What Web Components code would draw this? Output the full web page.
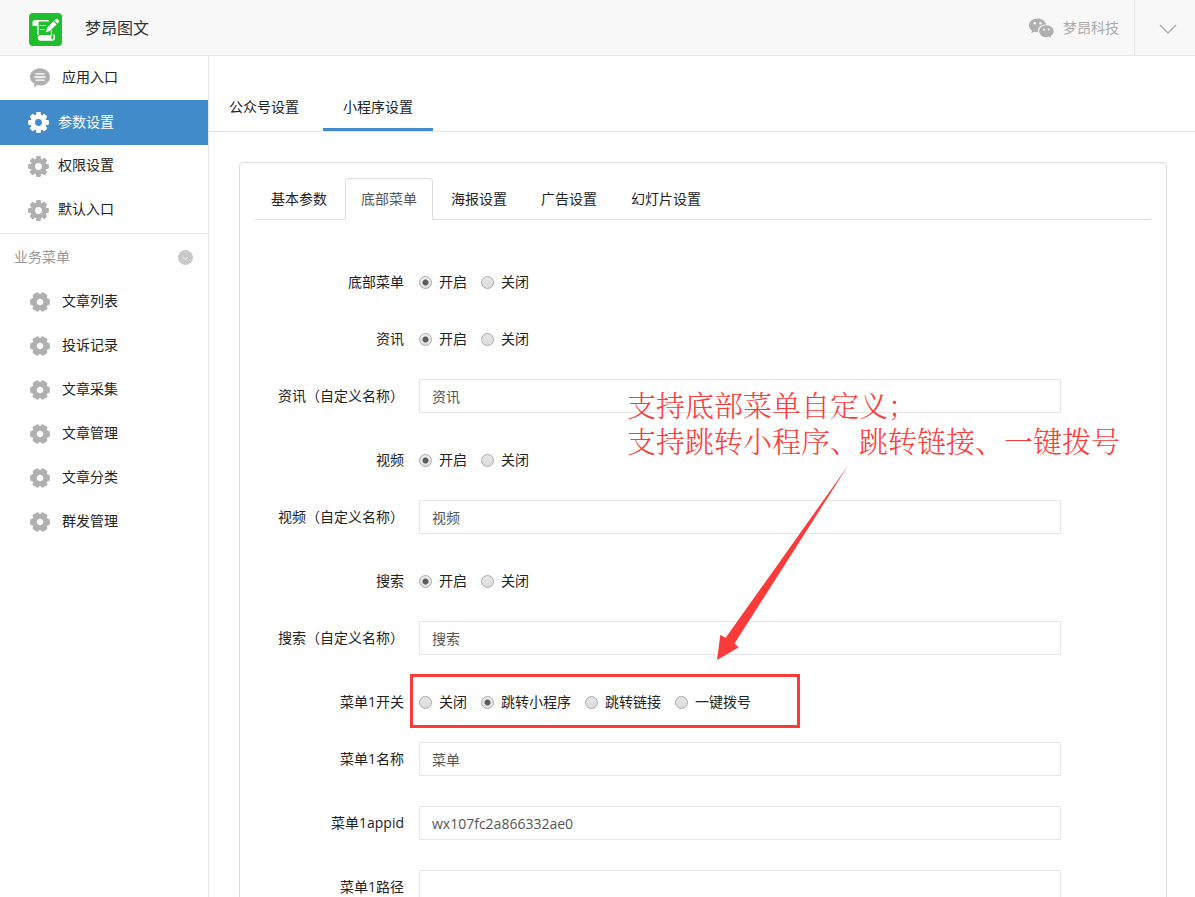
<!DOCTYPE html>
<html lang="zh-CN">
<head>
<meta charset="utf-8">
<meta name="viewport" content="width=device-width, initial-scale=1">
<title>梦昂图文</title>
<style>
  html, body { margin: 0; height: 100%; }
  body {
    font: 14px/20px "Open Sans", "Noto Sans CJK SC", sans-serif;
    color: #222;
    background: #fff;
    --line: #e5e5e8;
    --blue: #428bca;
    --red: #fd3a3a;
  }
</style>
</head>
<body>
<admin-shell>
  <app-header slot="header" app="梦昂图文" account="梦昂科技"></app-header>
  <side-nav slot="nav">
    <side-item icon="bubble">应用入口</side-item>
    <side-item icon="gear" active>参数设置</side-item>
    <side-item icon="gear">权限设置</side-item>
    <side-item icon="gear">默认入口</side-item>
    <side-heading>业务菜单</side-heading>
    <side-item icon="cog">文章列表</side-item>
    <side-item icon="cog">投诉记录</side-item>
    <side-item icon="cog">文章采集</side-item>
    <side-item icon="cog">文章管理</side-item>
    <side-item icon="cog">文章分类</side-item>
    <side-item icon="cog">群发管理</side-item>
  </side-nav>
  <page-tabs items="公众号设置,小程序设置" current="1"></page-tabs>
  <settings-card>
    <folder-tabs slot="tabs" items="基本参数,底部菜单,海报设置,广告设置,幻灯片设置" current="1"></folder-tabs>
    <radio-field label="底部菜单" options="开启,关闭" checked="0"></radio-field>
    <radio-field label="资讯" options="开启,关闭" checked="0"></radio-field>
    <text-field label="资讯（自定义名称）" value="资讯"></text-field>
    <radio-field label="视频" options="开启,关闭" checked="0"></radio-field>
    <text-field label="视频（自定义名称）" value="视频"></text-field>
    <radio-field label="搜索" options="开启,关闭" checked="0"></radio-field>
    <text-field label="搜索（自定义名称）" value="搜索"></text-field>
    <radio-field label="菜单1开关" options="关闭,跳转小程序,跳转链接,一键拨号" checked="1"></radio-field>
    <text-field label="菜单1名称" value="菜单"></text-field>
    <text-field label="菜单1appid" value="wx107fc2a866332ae0"></text-field>
    <text-field label="菜单1路径" value=""></text-field>
    <callout-note slot="note">
      <span>支持底部菜单自定义；</span>
      <span>支持跳转小程序、跳转链接、一键拨号</span>
    </callout-note>
  </settings-card>
</admin-shell>

<script>
const define = (name, render) => customElements.define(name, class extends HTMLElement {
  connectedCallback() {
    if (this.shadowRoot) return;
    this.attachShadow({ mode: 'open' }).innerHTML =
      '<style>:host, * { box-sizing: border-box; }' + render(this);
  }
});
const list = (el, name) => el.getAttribute(name).split(',');
const teeth = (count, start, width, reach, round) => Array.from({ length: count }, (_, i) =>
  `<rect x="${-width / 2}" y="${-reach}" width="${width}" height="4.5" rx="${round}" transform="rotate(${start + i * 360 / count})"/>`).join('');

const ICONS = {
  gear: `<svg width="21" height="21" viewBox="-10.5 -10.5 21 21" fill="currentColor">
    <circle r="5.7" fill="none" stroke="currentColor" stroke-width="4.6"/>${teeth(8, 0, 4.8, 10.4, 1.2)}</svg>`,
  cog: `<svg width="20" height="20" viewBox="-10 -10 20 20" fill="currentColor">
    <circle r="5.6" fill="none" stroke="currentColor" stroke-width="4.8"/>${teeth(6, 30, 7, 9.9, 2)}</svg>`,
  bubble: `<svg width="20" height="20" viewBox="0 0 20 20">
    <path fill="currentColor" d="M10 .3c5.600 0 10 3.700 10 8.600s-4.400 8.600-10 8.600c-1 0-2-.1-2.900-.4L4.300 19.700l.1-3.900C1.700 14.300 0 11.800 0 8.900 0 4 4.400.3 10 .3z"/>
    <path stroke="#fff" stroke-width="1.300" stroke-linecap="round" d="M6 5.800h8M5 9h10M6 12.200h8"/></svg>`
};

define('admin-shell', () => `
  :host { display: grid; grid-template: auto minmax(0, 1fr) / 209px minmax(0, 1fr); height: 100vh; overflow: hidden; }
  header { grid-column: 1 / -1; }
  aside { border-right: 1px solid var(--line); }
  main { overflow-y: auto; scrollbar-width: none; }
  </style>
  <header><slot name="header"></slot></header>
  <aside><slot name="nav"></slot></aside>
  <main><slot></slot></main>`);

define('app-header', el => `
  :host { display: flex; height: 56px; background: #f8f8f8; border-bottom: 1px solid var(--line); }
  .brand { display: flex; align-items: center; gap: 23px; padding-left: 29px; font-size: 16px; color: #333; }
  .brand svg { margin-top: 4px; }
  .account { display: flex; align-items: center; gap: 9px; margin-left: auto; padding-right: 15px; color: #aaa; text-decoration: none; }
  button { width: 61px; padding: 4px 0 0 6px; border: 0; border-left: 1px solid var(--line); background: none; }
  </style>
  <div class="brand">
    <svg width="33" height="33" viewBox="0 0 33 33" aria-hidden="true">
      <rect width="33" height="33" rx="4" fill="#1fbe2c"/>
      <path fill="#fff" d="M6 7h12.500c1 0 1.700.6 1.900 1.500H9.600V22H8V13H3.500V9.500C3.500 8 4.500 7 6 7z"/>
      <path fill="#fff" d="M11.500 22h11.300c-1 1.400-1 2.900.2 4.200h1.400V21.500h1.500v3.700c0 1.500-1 2.500-2.500 2.500H11.500c-3.700-.2-3.700-5.500 0-5.700z"/>
      <path stroke="#a9e6ad" d="M10.500 12.500h7M10.500 16.500h5"/>
      <path fill="#fff" d="M26.600 6.200c.6-.6 1.300-.6 1.900 0l1.200 1.200c.6.600.6 1.300 0 1.900l-1.300 1.300-3.100-3.100zM24.400 8.300l3.200 3.200-6.500 6.300-4.300 1.700 1.300-4.700z"/>
      <path stroke="#fff" stroke-width="1.200" d="M22.500 17.500v5"/>
    </svg>
    <span>${el.getAttribute('app')}</span>
  </div>
  <a class="account" href="#">
    <svg width="25" height="20" viewBox="0 0 25 20" aria-hidden="true">
      <path fill="#b0b0b0" d="M8.600.4C3.900.4 0 3.500 0 7.400c0 2.200 1.200 4.100 3.100 5.400L2.300 15.300l3-1.500c1.100.3 2.200.5 3.600.5C8.300 9.500 12 6.500 17.200 6.500 16.500 3 12.900.4 8.600.4z"/>
      <path fill="#b0b0b0" d="M17.400 7.300c-4 0-7.200 2.600-7.200 5.900s3.200 6 7.200 6c.9 0 1.700-.1 2.500-.4l2.400 1.200-.6-2.100c1.800-1.100 2.900-2.800 2.900-4.700 0-3.300-3.300-5.900-7.200-5.900z"/>
      <g fill="#f8f8f8"><circle cx="5.800" cy="5.200" r="1.200"/><circle cx="11.500" cy="5.200" r="1.200"/><circle cx="15" cy="11.500" r="1"/><circle cx="19.800" cy="11.500" r="1"/></g>
    </svg>
    <span>${el.getAttribute('account')}</span>
  </a>
  <button type="button" aria-label="展开菜单">
    <svg width="18" height="10" viewBox="0 0 18 10" fill="none" stroke="#aaa" stroke-width="1.300"><path d="M1 1l8 8 8-8"/></svg>
  </button>`);

define('side-nav', () => `
  :host { display: block; }
  nav { display: flex; flex-direction: column; }
  </style><nav><slot></slot></nav>`);

define('side-item', el => `
  :host { display: block; color: #222; --icon: #b0b0b0; }
  :host([active]) { margin-bottom: -1px; background: var(--blue); color: #fff; --icon: #fff; }
  a { display: flex; align-items: center; gap: 12px; height: 44px; padding-left: 30px; color: inherit; text-decoration: none; }
  :host([icon="gear"]) a { gap: 9px; padding-left: 28px; }
  :host([active]) a { height: 45px; }
  svg { display: block; color: var(--icon); }
  span { padding-bottom: 2px; }
  </style><a href="#">${ICONS[el.getAttribute('icon')]}<span><slot></slot></span></a>`);

define('side-heading', () => `
  :host { display: flex; align-items: center; justify-content: space-between; height: 47px; margin-top: 1px; padding: 0 15px 0 14px; border-top: 1px solid var(--line); color: #999; }
  button { display: block; padding: 0; border: 0; background: none; }
  svg { display: block; }
  </style><span><slot></slot></span>
  <button type="button" aria-label="收起"><svg width="15" height="15" viewBox="0 0 15 15"><circle cx="7.500" cy="7.500" r="7.500" fill="#c8c8c8"/><path fill="none" stroke="#f4f4f4" d="M5 7l2.500 2.300L10 7"/></svg></button>`);

define('page-tabs', el => `
  :host { display: block; border-bottom: 1px solid var(--line); }
  nav { display: flex; gap: 4px; padding-top: 27px; }
  a { height: 48px; padding: 14px 20px 0; color: #222; text-decoration: none; }
  a[aria-current] { border-bottom: 3px solid var(--blue); }
  </style><nav>${list(el, 'items').map((t, i) =>
    `<a href="#"${i == el.getAttribute('current') ? ' aria-current="page"' : ''}>${t}</a>`).join('')}</nav>`);

define('settings-card', () => `
  :host { display: block; padding: 30px 28px 30px 30px; }
  section { padding: 15px; border: 1px solid #ddd; border-radius: 4px; }
  form { position: relative; display: grid; gap: 30px; padding: 45px 90px 0 0; }
  ::slotted(callout-note) { position: absolute; left: 0; top: 45px; }
  </style><section><slot name="tabs"></slot><form><slot></slot><slot name="note"></slot></form></section>`);

define('folder-tabs', el => `
  :host { display: block; }
  nav { display: flex; gap: 2px; border-bottom: 1px solid #ddd; }
  a { height: 42px; margin-bottom: -1px; padding: 10px 15px; border: 1px solid transparent; border-radius: 4px 4px 0 0; color: #222; text-decoration: none; }
  a[aria-current] { border-color: #ddd #ddd #fff; background: #fff; color: #555; }
  </style><nav>${list(el, 'items').map((t, i) =>
    `<a href="#"${i == el.getAttribute('current') ? ' aria-current="page"' : ''}>${t}</a>`).join('')}</nav>`);

const fieldStyle = `
  :host { display: grid; grid-template-columns: 149px minmax(0, 1fr); column-gap: 15px; }
  .name { padding-top: 7px; text-align: right; white-space: nowrap; }`;

define('radio-field', el => fieldStyle + `
  .options { display: flex; gap: 14px; padding-top: 7px; }
  label { display: flex; align-items: center; gap: 7px; }
  input { appearance: none; width: 13px; height: 13px; margin: 0; border: 1px solid #aaa; border-radius: 50%; background: linear-gradient(#e6e6e6, #dcdcdc); }
  input:checked { background: radial-gradient(circle, #5c5c5c 0 2px, #5c5c5c 2.500px, transparent 3.500px), linear-gradient(#eee, #e0e0e0); }
  </style><span class="name" id="name">${el.getAttribute('label')}</span>
  <div class="options" role="radiogroup" aria-labelledby="name">${list(el, 'options').map((t, i) =>
    `<label><input type="radio" name="choice"${i == el.getAttribute('checked') ? ' checked' : ''}>${t}</label>`).join('')}</div>`);

define('text-field', el => fieldStyle + `
  input { width: 100%; height: 34px; padding: 6px 12px; border: 1px solid var(--line); background: #fff; color: #555; font: inherit; outline: 0; }
  </style><label class="name" for="field">${el.getAttribute('label')}</label>
  <input id="field" type="text" value="${el.getAttribute('value')}">`);

define('callout-note', () => `
  :host { display: block; pointer-events: none; color: var(--red); }
  svg { display: block; overflow: visible; }
  p { position: absolute; left: 372px; top: 124px; margin: 0; font: 300 29px/36px "Liberation Serif", "Noto Serif CJK SC", "Noto Sans CJK SC", serif; white-space: nowrap; }
  ::slotted(span) { display: block; }
  </style>
  <svg width="600" height="465" viewBox="0 0 600 465" aria-hidden="true">
    <path fill="currentColor" d="M593.500 200 479.500 378.500 483.700 382.300 462 395 465.300 370 470.700 372.700z"/>
    <rect x="156.500" y="410.500" width="387" height="51" fill="none" stroke="currentColor" stroke-width="3"/>
  </svg>
  <p><slot></slot></p>`);
</script>
</body>
</html>
